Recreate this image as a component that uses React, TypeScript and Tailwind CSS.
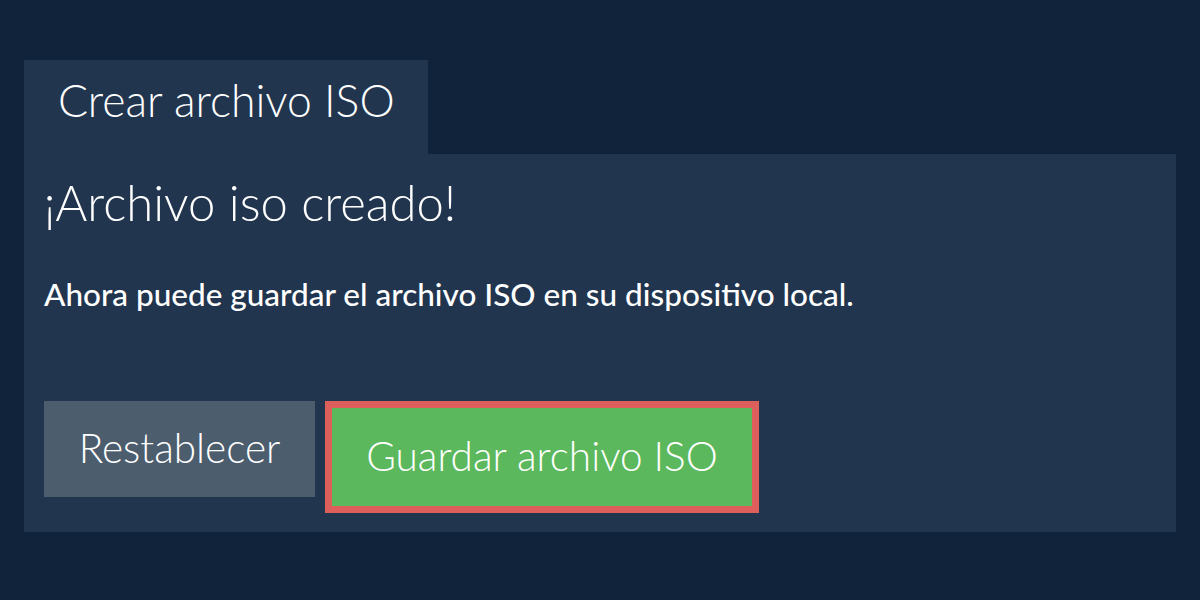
import React from "react";

const App = () => {
  return (
    <div
      className="h-[600px] w-[1200px] bg-[#11233a] px-6 pt-[60px] text-white"
      style={{ fontFamily: "Lato, 'Open Sans', sans-serif" }}
    >
      <div className="flex">
        <div className="h-[94px] w-[404px] bg-[#21354f] pl-[34px] pt-[18px] text-[44.5px] font-light leading-none">
          Crear archivo ISO
        </div>
      </div>
      <div className="flex h-[378px] flex-col bg-[#21354f] px-5 pt-[24px]">
        <h1 className="text-[49px] font-light leading-none">¡Archivo iso creado!</h1>
        <p className="mt-[52px] text-[31.5px] font-medium leading-none">
          Ahora puede guardar el archivo ISO en su dispositivo local.
        </p>
        <div className="mt-[90px] flex items-start gap-[10px]">
          <button className="flex h-[96px] w-[271px] items-center justify-center bg-[#4c5d6e] text-[40.5px] font-light">
            Restablecer
          </button>
          <button className="flex h-[112px] w-[434px] items-center justify-center border-[7px] border-[#dc5f5c] bg-[#5cb85c] text-[40.5px] font-light">
            Guardar archivo ISO
          </button>
        </div>
      </div>
    </div>
  );
};

export default App;
